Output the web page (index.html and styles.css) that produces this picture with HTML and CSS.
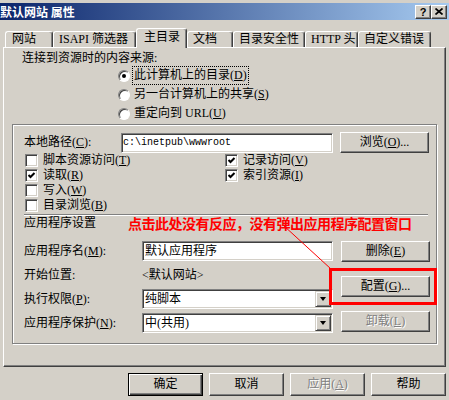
FILE: index.html
```html
<!DOCTYPE html>
<html lang="zh-CN">
<head>
    <meta charset="UTF-8">
    <meta name="viewport" content="width=device-width, initial-scale=1.0">
    <title>默认网站 属性</title>
    <link rel="stylesheet" href="styles.css">
</head>
<body>
<div class="window">
    <!-- Title bar -->
    <div class="titlebar">
        <span class="title">默认网站 属性</span>
        <span class="cap-btn">?</span>
        <span class="cap-btn">
            <svg width="8" height="7" viewBox="0 0 8 7"><path d="M0.5 0.5L7.5 6.5M7.5 0.5L0.5 6.5" stroke="#000" stroke-width="1.7"/></svg>
        </span>
    </div>

    <!-- Tabs -->
    <div class="tabs">
        <div class="tab tab-site">网站</div>
        <div class="tab tab-isapi">ISAPI 筛选器</div>
        <div class="tab tab-home active">主目录</div>
        <div class="tab tab-docs">文档</div>
        <div class="tab tab-security">目录安全性</div>
        <div class="tab tab-http">HTTP 头</div>
        <div class="tab tab-errors">自定义错误</div>
    </div>

    <div class="panel">
        <div class="source">连接到资源时的内容来源:</div>
        <div class="radios">
            <div class="radio-row"><span class="radio on"></span><span class="focus">此计算机上的目录(<u>D</u>)</span></div>
            <div class="radio-row"><span class="radio"></span><span>另一台计算机上的共享(<u>S</u>)</span></div>
            <div class="radio-row"><span class="radio"></span><span>重定向到 URL(<u>U</u>)</span></div>
        </div>

        <div class="frame">
            <div class="path-row">
                <span class="path-label">本地路径(<u>C</u>):</span>
                <div class="textbox path-box">c:\inetpub\wwwroot</div>
                <div class="btn browse"><span>浏览(<u>O</u>)...</span></div>
            </div>

            <div class="checks">
                <div class="check"><span class="cb"></span><span>脚本资源访问(<u>T</u>)</span></div>
                <div class="check"><span class="cb"><svg class="tick" viewBox="0 0 11 11"><path d="M2.5 5L4.5 7L8.5 3"/></svg></span><span>记录访问(<u>V</u>)</span></div>
                <div class="check"><span class="cb"><svg class="tick" viewBox="0 0 11 11"><path d="M2.5 5L4.5 7L8.5 3"/></svg></span><span>读取(<u>R</u>)</span></div>
                <div class="check"><span class="cb"><svg class="tick" viewBox="0 0 11 11"><path d="M2.5 5L4.5 7L8.5 3"/></svg></span><span>索引资源(<u>I</u>)</span></div>
                <div class="check"><span class="cb"></span><span>写入(<u>W</u>)</span></div>
                <div></div>
                <div class="check"><span class="cb"></span><span>目录浏览(<u>B</u>)</span></div>
                <div></div>
            </div>

            <div class="sep"></div>

            <div class="settings-row">
                <span>应用程序设置</span>
                <span class="note">点击此处没有反应，没有弹出应用程序配置窗口</span>
            </div>

            <div class="app">
                <div class="app-fields">
                    <div class="app-row">
                        <span class="app-label">应用程序名(<u>M</u>):</span>
                        <div class="textbox field">默认应用程序</div>
                    </div>
                    <div class="app-row">
                        <span class="app-label">开始位置:</span>
                        <span class="plain">&lt;默认网站&gt;</span>
                    </div>
                    <div class="app-row">
                        <span class="app-label">执行权限(<u>P</u>):</span>
                        <div class="textbox field combo"><span class="combo-text">纯脚本</span><span class="combo-btn"></span></div>
                    </div>
                    <div class="app-row">
                        <span class="app-label">应用程序保护(<u>N</u>):</span>
                        <div class="textbox field combo"><span class="combo-text">中(共用)</span><span class="combo-btn"></span></div>
                    </div>
                </div>
                <div class="app-buttons">
                    <div class="btn side"><span>删除(<u>E</u>)</span></div>
                    <div class="btn side"><span>配置(<u>G</u>)...</span></div>
                    <div class="btn side disabled"><span>卸载(<u>L</u>)</span></div>
                </div>
            </div>
        </div>
    </div>

    <!-- Dialog buttons -->
    <div class="footer">
        <div class="btn action default">确定</div>
        <div class="btn action">取消</div>
        <div class="btn action disabled"><span>应用(<u>A</u>)</span></div>
        <div class="btn action">帮助</div>
    </div>

    <!-- Red annotation drawn over the dialog -->
    <svg class="annot" width="449" height="400" viewBox="0 0 449 400">
        <line x1="283" y1="225" x2="331" y2="269" stroke="#f00" stroke-width="1"/>
        <rect x="330.5" y="269.5" width="105" height="34" fill="none" stroke="#f00" stroke-width="3"/>
    </svg>
</div>
</body>
</html>
```

FILE: styles.css
```css
* { box-sizing: border-box; }
body {
    margin: 0; width: 449px; height: 400px; overflow: hidden;
    background: #d4d0c8; color: #000;
    font: 12px/15px "Liberation Serif", "Noto Sans CJK SC", serif;
}
u { text-decoration: underline; }
.window { position: relative; height: 400px; padding-top: 3px; }

/* Title bar */
.titlebar {
    display: flex; align-items: center; height: 17px; padding-right: 2px;
    background: linear-gradient(to right, #0a246a, #a6caf0);
    color: #fff; font-weight: bold;
}
.title { flex: 1; margin-left: 0; white-space: nowrap; font-family: "Noto Sans CJK SC", sans-serif; }
.cap-btn {
    display: flex; align-items: center; justify-content: center;
    width: 16px; height: 14px; background: #d4d0c8; color: #000;
    border: 1px solid; border-color: #fff #404040 #404040 #fff;
    box-shadow: inset -1px -1px #808080;
    font: bold 11px/12px "Liberation Sans", sans-serif;
}

/* Tabs */
.tabs { display: flex; align-items: flex-end; height: 19px; margin-top: 8px; padding-left: 5px; }
.tab {
    height: 16px; padding-left: 6px; line-height: 15px; white-space: nowrap;
    border: 1px solid; border-bottom: 0; border-color: #fff #404040 #fff #fff;
    border-radius: 3px 3px 0 0; box-shadow: inset -1px 0 #808080;
}
.tab.active {
    position: relative; z-index: 1; height: 20px; margin-bottom: -1px;
    padding-left: 7px; line-height: 17px; background: #d4d0c8;
}
.tab-site { width: 48px; }
.tab-isapi { width: 83px; padding-left: 5px; }
.tab-home { width: 51px; }
.tab-docs { width: 46px; padding-left: 5px; }
.tab-security { width: 72px; padding-left: 5px; }
.tab-http { width: 53px; padding-left: 5px; }
.tab-errors { width: 73px; padding-left: 5px; }

/* Tab page */
.panel {
    width: 443px; height: 320px; margin-left: 3px; padding: 3px 0 0 8px;
    border: 1px solid; border-color: #fff #404040 #404040 #fff;
    box-shadow: inset -1px -1px #808080;
}
.source { margin-left: 10px; }
.radios { margin-left: 106px; }
.radio-row { display: flex; align-items: center; gap: 4px; height: 19px; }
.radio {
    position: relative; flex: none; width: 12px; height: 12px; border-radius: 50%;
    background: #fff; border: 1px solid; border-color: #808080 #fff #fff #808080;
    box-shadow: inset 1px 1px #404040;
}
.radio.on::after {
    content: ""; position: absolute; left: 3px; top: 3px;
    width: 4px; height: 4px; border-radius: 50%; background: #000;
}
.focus { outline: 1px dotted #000; outline-offset: 1px; }

/* Etched group box */
.frame {
    width: 425px; height: 220px; margin-top: 1px; padding: 0 7px 0 11px;
    border: 1px solid #808080; box-shadow: inset 1px 1px #fff, 1px 1px #fff;
}
.path-row { display: flex; align-items: center; height: 21px; margin-top: 7px; }
.path-label { width: 97px; }
.textbox {
    background: #fff; border: 1px solid; border-color: #808080 #fff #fff #808080;
    box-shadow: inset 1px 1px #404040, inset -1px -1px #d4d0c8;
}
.path-box {
    width: 212px; height: 20px; padding-left: 1px;
    font: 10px/18px "Liberation Mono", monospace;
}
.btn {
    display: flex; align-items: center; justify-content: center; white-space: nowrap;
    background: #d4d0c8; border: 1px solid; border-color: #fff #404040 #404040 #fff;
    box-shadow: inset -1px -1px #808080;
}
.btn.disabled { color: #808080; text-shadow: 1px 1px #fff; }
.browse { width: 89px; height: 21px; margin-left: 7px; }

.checks { display: grid; grid-template-columns: 200px 1fr; grid-auto-rows: 15px; }
.check { display: flex; align-items: center; gap: 5px; padding-left: 1px; }
.cb {
    flex: none; width: 13px; height: 13px; background: #fff;
    border: 1px solid; border-color: #808080 #fff #fff #808080;
    box-shadow: inset 1px 1px #404040, inset -1px -1px #d4d0c8;
}
.tick { display: block; width: 11px; height: 11px; fill: none; stroke: #000; stroke-width: 2; }

.sep { height: 2px; margin: 1px 1px 0 0; border-top: 1px solid #808080; border-bottom: 1px solid #fff; }
.settings-row { display: flex; align-items: center; height: 15px; }
.note {
    margin-left: 32px; color: #f00; white-space: nowrap; letter-spacing: -0.5px;
    font: bold 14px/15px "Noto Sans CJK SC", sans-serif;
}

.app { display: flex; gap: 8px; margin-top: 10px; }
.app-fields { display: flex; flex-direction: column; gap: 4px; width: 309px; }
.app-row { display: flex; align-items: center; height: 20px; }
.app-label { width: 118px; flex: none; }
.field { width: 191px; height: 20px; padding-left: 2px; line-height: 18px; }
.combo { display: flex; padding: 1px; }
.combo-text { flex: 1; padding-left: 1px; line-height: 16px; }
.combo-btn {
    display: flex; align-items: center; justify-content: center;
    width: 16px; height: 16px; background: #d4d0c8;
    border: 1px solid; border-color: #d4d0c8 #404040 #404040 #d4d0c8;
    box-shadow: inset 1px 1px #fff, inset -1px -1px #808080;
}
.combo-btn::before {
    content: ""; border-top: 4px solid #000;
    border-left: 3.5px solid transparent; border-right: 3.5px solid transparent;
}
.app-buttons { display: flex; flex-direction: column; gap: 14px; }
.side { width: 89px; height: 21px; }

/* Dialog buttons */
.footer { display: flex; justify-content: flex-end; gap: 6px; margin-top: 6px; padding-right: 3px; }
.action { width: 75px; height: 23px; }
.action.default {
    border-color: #000;
    box-shadow: inset 1px 1px #fff, inset -1px -1px #404040, inset -2px -2px #808080;
}

.annot { position: absolute; left: 0; top: 0; pointer-events: none; }
```
